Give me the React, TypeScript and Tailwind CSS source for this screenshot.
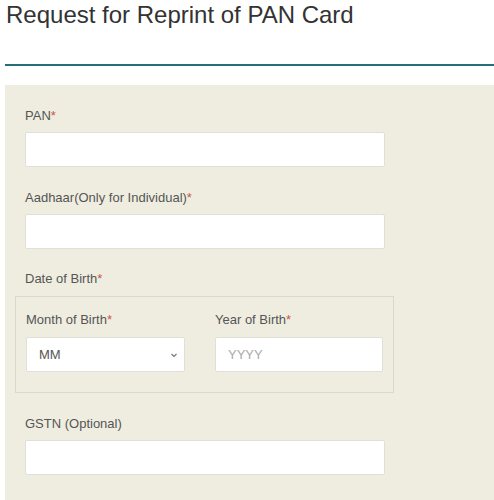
export default function App() {
  return (
    <div className="min-h-[500px] bg-white font-['Liberation_Sans',Arial,sans-serif] text-[#555]">
      <div className="pl-[5px]">
        <h1 className="pt-[1px] pl-[1px] text-[24px] leading-[28px] text-[#333]">Request for Reprint of PAN Card</h1>
        <div className="mt-[35px] h-[2px] bg-[#23707b]" />
        <div className="mt-[19px] bg-[#efede0] pl-[20px] pt-[22px] pb-[30px]">
          <Field label="PAN" required />
          <div className="mt-[22px]">
            <Field label="Aadhaar(Only for Individual)" required />
          </div>
          <div className="mt-[21px] text-[13px] leading-[18px]">
            Date of Birth<span className="text-[#c9573f]">*</span>
          </div>
          <div className="ml-[-10px] mt-[8px] w-[379px] border border-[#dcd9cb] pl-[10px] pt-[14px] pb-[20px]">
            <div className="flex gap-[30px]">
              <div className="w-[159px]">
                <Label text="Month of Birth" required />
                <div className="mt-[8px] flex h-[35px] items-center justify-between rounded-[2px] border border-[#e2e0d6] bg-white pl-[12px] pr-[5px] text-[13px]">
                  <span>MM</span>
                  <svg width="10" height="10" viewBox="0 0 10 10" fill="none" stroke="#777" strokeWidth="1.2">
                    <path d="M2.5 4l2.5 2.5L7.5 4" />
                  </svg>
                </div>
              </div>
              <div className="w-[168px]">
                <Label text="Year of Birth" required />
                <div className="mt-[8px] flex h-[35px] items-center rounded-[2px] border border-[#e2e0d6] bg-white pl-[12px] text-[13px] text-[#aaa]">
                  YYYY
                </div>
              </div>
            </div>
          </div>
          <div className="mt-[22px]">
            <Field label="GSTN (Optional)" />
          </div>
        </div>
      </div>
    </div>
  )
}

function Label({ text, required }: { text: string; required?: boolean }) {
  return (
    <div className="text-[13px] leading-[18px]">
      {text}
      {required && <span className="text-[#c9573f]">*</span>}
    </div>
  )
}

function Field({ label, required }: { label: string; required?: boolean }) {
  return (
    <div>
      <Label text={label} required={required} />
      <div className="mt-[7px] h-[35px] w-[360px] rounded-[2px] border border-[#e2e0d6] bg-white" />
    </div>
  )
}
